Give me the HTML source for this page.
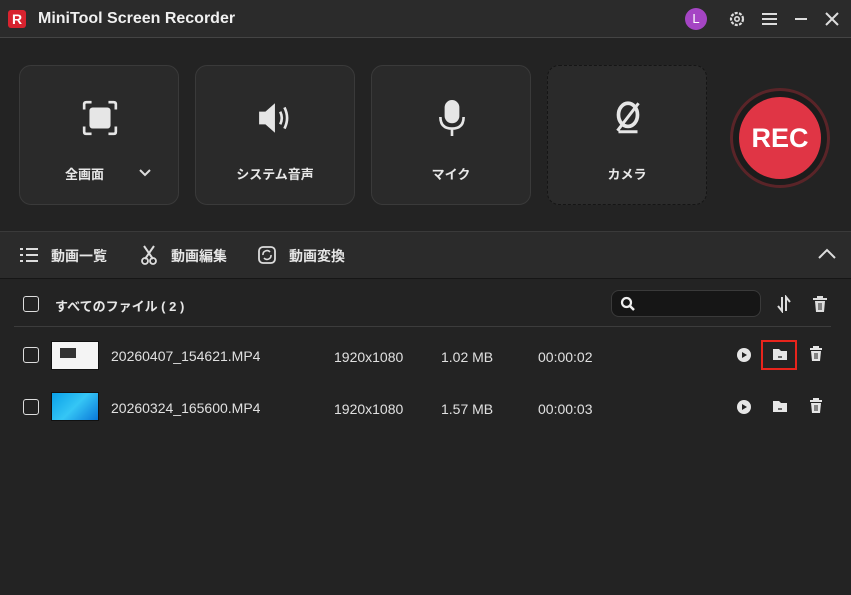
<!DOCTYPE html>
<html><head><meta charset="utf-8"><style>
*{box-sizing:border-box;margin:0;padding:0}
body{width:851px;height:595px;background:#232323;font-family:"Liberation Sans","Noto Sans CJK JP",sans-serif;color:#e6e6e6;position:relative;overflow:hidden}
.abs{position:absolute}
.title{left:0;top:0;width:851px;height:38px;background:#2b2b2b;border-bottom:1px solid #444}
.card{top:65px;width:160px;height:140px;background:#2a2a2a;border:1px solid #3a3a3a;border-radius:12px}
.card .lbl{position:absolute;top:98px;width:100%;text-align:center;font-size:13px;font-weight:bold;color:#e8e8e8}
.card svg{position:absolute;left:61px;top:33px}
.tabs{left:0;top:231px;width:851px;height:48px;background:#2b2b2b;border-top:1px solid #3a3a3a;border-bottom:1px solid #161616}
.t{font-size:14px;font-weight:bold;color:#e6e6e6;top:246px}
.cb{width:16px;height:16px;border:1.5px solid #ddd;border-radius:3px}
.row{font-size:14px;color:#e0e0e0}
</style></head><body>
<div class="abs title"></div>
<div class="abs" style="left:8px;top:10px;width:18px;height:18px;background:#d8232f;border-radius:3px;color:#fff;font-weight:bold;font-size:14px;text-align:center;line-height:18px">R</div>
<div class="abs" style="left:38px;top:10px;font-size:16px;font-weight:bold;color:#f0f0f0">MiniTool Screen Recorder</div>
<div class="abs" style="left:685px;top:8px;width:22px;height:22px;border-radius:50%;background:#a545c4;color:#fff;font-size:13px;text-align:center;line-height:22px">L</div>
<svg class="abs" style="left:728px;top:10px" width="18" height="18" viewBox="0 0 18 18"><circle cx="9" cy="9" r="6" fill="none" stroke="#ddd" stroke-width="2.2" stroke-dasharray="3 1.3"/><circle cx="9" cy="9" r="2.2" fill="none" stroke="#ddd" stroke-width="1.6"/></svg>
<svg class="abs" style="left:762px;top:12px" width="15" height="14"><path d="M0 2H15M0 7H15M0 12H15" stroke="#ddd" stroke-width="2"/></svg>
<svg class="abs" style="left:794px;top:12px" width="14" height="14"><path d="M1 7H13" stroke="#ddd" stroke-width="2"/></svg>
<svg class="abs" style="left:825px;top:12px" width="14" height="14"><path d="M1 1L13 13M13 1L1 13" stroke="#ddd" stroke-width="2"/></svg>

<div class="abs card" style="left:19px"><svg width="38" height="38" viewBox="0 0 36 36"><path d="M3 10V5Q3 3 5 3H10M26 3H31Q33 3 33 5V10M33 26V31Q33 33 31 33H26M10 33H5Q3 33 3 31V26" stroke="#e6e6e6" stroke-width="2.5" fill="none"/><rect x="8" y="8" width="20" height="20" rx="3" fill="#e6e6e6"/></svg><div class="lbl" style="text-align:left;left:45px">全画面</div><svg style="left:118px;top:102px" width="14" height="10"><path d="M2 2L7 7L12 2" stroke="#ddd" stroke-width="2" fill="none"/></svg></div>
<div class="abs card" style="left:195px"><svg width="38" height="38" viewBox="0 0 36 36"><path d="M2 12H8L17 4V32L8 24H2Z" fill="#e6e6e6"/><path d="M22 12Q25 18 22 24M26 8Q31 18 26 28" stroke="#e6e6e6" stroke-width="2.5" fill="none"/></svg><div class="lbl">システム音声</div></div>
<div class="abs card" style="left:371px"><svg width="38" height="38" viewBox="0 0 36 36"><rect x="11" y="1" width="14" height="22" rx="7" fill="#e6e6e6"/><path d="M7 17Q7 28 18 28Q29 28 29 17M18 28V35" stroke="#e6e6e6" stroke-width="2.5" fill="none"/></svg><div class="lbl">マイク</div></div>
<div class="abs card" style="left:547px;border:1px dashed #151515"><svg width="38" height="38" viewBox="0 0 36 36"><ellipse cx="18" cy="15" rx="9" ry="11" stroke="#e6e6e6" stroke-width="3.5" fill="none"/><path d="M9 31H27M8 30L28 4" stroke="#e6e6e6" stroke-width="2.8"/></svg><div class="lbl">カメラ</div></div>
<div class="abs" style="left:730px;top:88px;width:100px;height:100px;border-radius:50%;border:3px solid #5a2428;background:#1c1c1c"></div>
<div class="abs" style="left:739px;top:97px;width:82px;height:82px;border-radius:50%;background:#e03545;color:#fff;font-size:27px;font-weight:bold;text-align:center;line-height:82px">REC</div>

<div class="abs tabs"></div>
<svg class="abs" style="left:20px;top:247px" width="18" height="16"><path d="M0 2H3M6 2H18M0 8H3M6 8H18M0 14H3M6 14H18" stroke="#ddd" stroke-width="2"/></svg>
<div class="abs t" style="left:51px">動画一覧</div>
<svg class="abs" style="left:141px;top:245px" width="16" height="20"><path d="M3 1L12 14M13 1L4 14" stroke="#ddd" stroke-width="2"/><circle cx="4" cy="16" r="3" fill="none" stroke="#ddd" stroke-width="1.8"/><circle cx="12" cy="16" r="3" fill="none" stroke="#ddd" stroke-width="1.8"/></svg>
<div class="abs t" style="left:171px">動画編集</div>
<svg class="abs" style="left:258px;top:246px" width="18" height="18"><rect x="1" y="1" width="16" height="16" rx="4" fill="none" stroke="#ddd" stroke-width="1.8"/><path d="M5 9A4 4 0 0 1 12 6M13 9A4 4 0 0 1 6 12" stroke="#ddd" stroke-width="1.6" fill="none"/></svg>
<div class="abs t" style="left:289px">動画変換</div>
<svg class="abs" style="left:818px;top:248px" width="18" height="12"><path d="M1 10L9 2L17 10" stroke="#ddd" stroke-width="2" fill="none"/></svg>

<div class="abs cb" style="left:23px;top:296px"></div>
<div class="abs" style="left:55px;top:296px;font-size:13px;font-weight:bold">すべてのファイル ( 2 )</div>
<div class="abs" style="left:611px;top:290px;width:150px;height:27px;background:#161616;border:1px solid #3a3a3a;border-radius:8px"></div>
<svg class="abs" style="left:620px;top:296px" width="16" height="16"><circle cx="6.5" cy="6.5" r="4.5" fill="none" stroke="#eee" stroke-width="2.2"/><path d="M10 10L14 14" stroke="#eee" stroke-width="2.5"/></svg>
<svg class="abs" style="left:777px;top:295px" width="14" height="18"><path d="M5 2V16L1 11M9 16V2L13 7" stroke="#ddd" stroke-width="2" fill="none"/></svg>
<svg class="abs" style="left:812px;top:295px" width="16" height="18"><path d="M1 4H15M6 4V2H10V4" stroke="#ddd" stroke-width="2" fill="none"/><path d="M3 6H13L12 17H4Z" fill="#ddd"/><path d="M7 8V15M9 8V15" stroke="#232323" stroke-width="1"/></svg>
<div class="abs" style="left:14px;top:326px;width:817px;height:1px;background:#3c3c3c"></div>

<div class="abs cb" style="left:23px;top:347px"></div>
<div class="abs" style="left:51px;top:341px;width:48px;height:29px;background:#f4f4f4;border:1px solid #111"><div style="position:absolute;left:8px;top:6px;width:16px;height:10px;background:#333"></div></div>
<div class="abs row" style="left:111px;top:348px">20260407_154621.MP4</div>
<div class="abs row" style="left:334px;top:349px">1920x1080</div>
<div class="abs row" style="left:441px;top:349px">1.02 MB</div>
<div class="abs row" style="left:538px;top:349px">00:00:02</div>
<div class="abs cb" style="left:23px;top:399px"></div>
<div class="abs" style="left:51px;top:392px;width:48px;height:29px;background:linear-gradient(135deg,#0aa0e8,#35c6f5 50%,#0a78d8);border:1px solid #111"></div>
<div class="abs row" style="left:111px;top:400px">20260324_165600.MP4</div>
<div class="abs row" style="left:334px;top:401px">1920x1080</div>
<div class="abs row" style="left:441px;top:401px">1.57 MB</div>
<div class="abs row" style="left:538px;top:401px">00:00:03</div>

<div class="abs" style="left:761px;top:340px;width:36px;height:30px;border:2px solid #e8241c"></div>
<svg class="abs" style="left:736px;top:347px" width="16" height="16"><circle cx="8" cy="8" r="7" fill="#e6e6e6"/><path d="M6 5V11L11 8Z" fill="#232323"/></svg>
<svg class="abs" style="left:772px;top:346px" width="16" height="16"><path d="M1 3H7L9 5H15V14H1Z" fill="#e6e6e6"/><path d="M6 11H10" stroke="#232323" stroke-width="1.3"/></svg>
<svg class="abs" style="left:808px;top:346px" width="16" height="16"><path d="M2 3H14M6 3V1H10V3" stroke="#e6e6e6" stroke-width="2" fill="none"/><path d="M3 5H13L12 15H4Z" fill="#e6e6e6"/><path d="M7 7V13M9 7V13" stroke="#232323"/></svg>
<svg class="abs" style="left:736px;top:399px" width="16" height="16"><circle cx="8" cy="8" r="7" fill="#e6e6e6"/><path d="M6 5V11L11 8Z" fill="#232323"/></svg>
<svg class="abs" style="left:772px;top:398px" width="16" height="16"><path d="M1 3H7L9 5H15V14H1Z" fill="#e6e6e6"/><path d="M6 11H10" stroke="#232323" stroke-width="1.3"/></svg>
<svg class="abs" style="left:808px;top:398px" width="16" height="16"><path d="M2 3H14M6 3V1H10V3" stroke="#e6e6e6" stroke-width="2" fill="none"/><path d="M3 5H13L12 15H4Z" fill="#e6e6e6"/><path d="M7 7V13M9 7V13" stroke="#232323"/></svg>
</body></html>
